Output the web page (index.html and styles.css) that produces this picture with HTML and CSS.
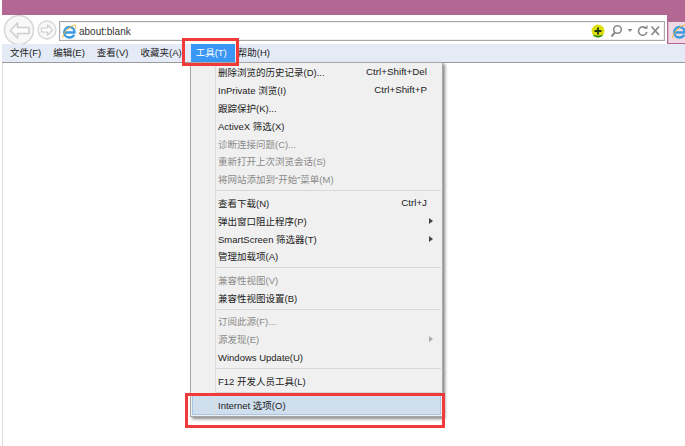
FILE: index.html
```html
<!DOCTYPE html>
<html lang="zh">
<head>
<meta charset="utf-8">
<title>Internet 选项</title>
<link rel="stylesheet" href="styles.css">
</head>
<body>
<div class="window">
  <div class="titlebar"></div>
  <div class="navbar">
    <div class="navmain">
      <div class="navbuttons">
        <svg width="32" height="30" viewBox="0 0 32 30"><circle cx="16" cy="15" r="14.500" fill="#f7f7f7" stroke="#d6d6d6" stroke-width="1.500"/><path d="M7.500 15.500l7-7.500v4.500h11.500v6H14.500v4.500z" fill="#fcfcfc" stroke="#cfcfcf" stroke-width="1.600" stroke-linejoin="round"/></svg>
        <svg class="forward" width="20" height="20" viewBox="0 0 20 20"><circle cx="10" cy="10" r="9" fill="#f7f7f7" stroke="#d6d6d6" stroke-width="1.300"/><path d="M15.500 10l-5-5v3H4.500v4h6v3z" fill="#fcfcfc" stroke="#cfcfcf" stroke-width="1.200" stroke-linejoin="round"/></svg>
      </div>
      <div class="address">
        <svg width="14" height="15" viewBox="0 0 14 15"><path d="M3 8.500h9.500C12.800 5 10.500 3 7.500 3 4.500 3 2.200 5.400 2.200 8.500S4.500 13.500 7.500 13.500c2.200 0 3.800-1 4.700-2.800" fill="none" stroke="#3a9be0" stroke-width="2.300"/><path d="M.7 14C.3 10 6 3 12.500 1c1.500-.3 1.500 2.500.7 4" fill="none" stroke="#f0b429" stroke-width="1"/></svg>
        <span class="url">about:blank</span>
        <span class="spacer"></span>
        <svg class="shield" width="14" height="14" viewBox="0 0 14 14"><circle cx="7" cy="7" r="6.500" fill="#dede10"/><path d="M1.500 10.500a6.500 6.500 0 0 0 11 0c-3 1.500-8 1.500-11 0z" fill="#2c8a1a"/><path d="M7 3.500v7M3.500 7h7" stroke="#1d3a10" stroke-width="1.800"/></svg>
        <svg class="tool" width="50" height="14" viewBox="0 0 50 14"><circle cx="7.500" cy="5.500" r="3.800" fill="none" stroke="#8a8a8a" stroke-width="1.600"/><path d="M4.800 8.500L1.500 12.500" stroke="#8a8a8a" stroke-width="2"/><path d="M17.500 5h5l-2.500 3z" fill="#8a8a8a"/><path d="M36 4.500a4.200 4.200 0 1 0 .8 3.500" fill="none" stroke="#8a8a8a" stroke-width="1.600"/><path d="M33.500 4.800h4V1z" fill="#8a8a8a"/><path d="M41.500 2.500l7.500 8.500M49 2.500L41.500 11" stroke="#8a8a8a" stroke-width="1.800"/></svg>
      </div>
    </div>
    <div class="tabstrip">
      <div class="tab">
        <svg width="14" height="15" viewBox="0 0 14 15"><path d="M3 8.500h9.500C12.800 5 10.500 3 7.500 3 4.500 3 2.200 5.400 2.200 8.500S4.500 13.500 7.500 13.500c2.200 0 3.800-1 4.700-2.800" fill="none" stroke="#3a9be0" stroke-width="2.300"/><path d="M.7 14C.3 10 6 3 12.500 1c1.500-.3 1.500 2.500.7 4" fill="none" stroke="#f0b429" stroke-width="1"/></svg>
      </div>
    </div>
  </div>
  <div class="menubar">
    <span class="menuitem">文件(F)</span>
    <span class="menuitem">编辑(E)</span>
    <span class="menuitem">查看(V)</span>
    <span class="menuitem">收藏夹(A)</span>
    <span class="menuitem active">工具(T)</span>
    <span class="menuitem">帮助(H)</span>
  </div>
  <div class="content"></div>
</div>

<div class="menu">
  <div class="row"><span>删除浏览的历史记录(D)...</span><span class="key">Ctrl+Shift+Del</span></div>
  <div class="row"><span>InPrivate 浏览(I)</span><span class="key">Ctrl+Shift+P</span></div>
  <div class="row"><span>跟踪保护(K)...</span></div>
  <div class="row"><span>ActiveX 筛选(X)</span></div>
  <div class="row off"><span>诊断连接问题(C)...</span></div>
  <div class="row off"><span>重新打开上次浏览会话(S)</span></div>
  <div class="row off"><span>将网站添加到“开始”菜单(M)</span></div>
  <div class="sep"></div>
  <div class="row"><span>查看下载(N)</span><span class="key">Ctrl+J</span></div>
  <div class="row"><span>弹出窗口阻止程序(P)</span><i class="arrow"></i></div>
  <div class="row"><span>SmartScreen 筛选器(T)</span><i class="arrow"></i></div>
  <div class="row"><span>管理加载项(A)</span></div>
  <div class="sep"></div>
  <div class="row off"><span>兼容性视图(V)</span></div>
  <div class="row"><span>兼容性视图设置(B)</span></div>
  <div class="sep"></div>
  <div class="row off"><span>订阅此源(F)...</span></div>
  <div class="row off"><span>源发现(E)</span><i class="arrow"></i></div>
  <div class="row"><span>Windows Update(U)</span></div>
  <div class="sep"></div>
  <div class="row"><span>F12 开发人员工具(L)</span></div>
  <div class="sep"></div>
  <div class="row hot"><span>Internet 选项(O)</span></div>
</div>
<div class="mark mark-tools"></div>
<div class="mark mark-options"></div>
</body>
</html>
```
FILE: styles.css
```css
* { box-sizing: border-box; }
html, body { margin: 0; height: 446px; overflow: hidden; background: #fff; }
body { position: relative; font-family: "Liberation Sans", "Noto Sans CJK SC", sans-serif; font-size: 9.5px; color: #222; }
svg { display: block; flex: none; }
.window { display: flex; flex-direction: column; height: 446px; padding-left: 2px; }
.titlebar { height: 15px; background: #b26892; flex: none; }
.navbar { height: 29px; display: flex; flex: none; }
.navmain { width: 665px; background: #fff; display: flex; align-items: flex-start; flex: none; }
.navbuttons { width: 57px; padding: 0 0 0 1px; display: flex; align-items: center; flex: none; height: 29px; }
.forward { margin-left: 2px; }
.address { width: 606px; height: 20px; margin-top: 6px; border: 1px solid #a8a8a8; box-shadow: inset 0 0 0 1px #f0f0f0; background: #fff; display: flex; align-items: center; padding: 0 4px 0 2px; gap: 3px; flex: none; }
.url { font-size: 10px; color: #333; }
.spacer { flex: 1; }
.tool { margin-left: 2px; }
.tabstrip { flex: 1; background: #b26892; padding: 7px 0 0 1px; }
.tab { height: 21px; background: #f0d8e4; border-left: 1px solid #d8b8c8; padding: 2px 0 0 3px; overflow: hidden; }
.menubar { height: 19px; background: #e4ebf7; display: flex; align-items: center; padding-left: 2px; border-bottom: 1px solid #9a9a9a; flex: none; }
.menuitem { padding: 0 6px; line-height: 18px; white-space: nowrap; }
.active { background: #3a97f5; color: #fff; padding: 0 8px 0 5px; margin: 0 -3px 0 3px; position: relative; }
.content { flex: 1; border-left: 1px solid #dcdcdc; }
.menu { position: absolute; left: 190px; top: 62px; width: 253px; height: 355px; background: #f0f0f0; border: 1px solid #a8a8a8; box-shadow: 2px 2px 3px #888; padding: 0 1px 0 25px; }
.menu::before { content: ""; position: absolute; left: 24px; top: 0; bottom: 0; width: 1px; background: #dcdcdc; }
.row { height: 17.9px; display: flex; align-items: center; justify-content: space-between; padding: 0 14px 0 2px; white-space: nowrap; }
.off { color: #8a8a8a; }
.key { font-size: 9.8px; }
.arrow { width: 0; height: 0; margin-right: -6px; border-left: 4px solid #444; border-top: 3px solid transparent; border-bottom: 3px solid transparent; }
.off .arrow { border-left-color: #aaa; }
.sep { height: 5.6px; position: relative; }
.sep::after { content: ""; position: absolute; left: 0; right: 0; top: 2px; height: 1px; background: #d8d8d8; }
.hot { height: 19.500px; margin-left: -24px; padding-left: 25px; background: #cfdfee; border: 1px solid #a9c6e6; }
.mark { position: absolute; border: 3px solid #f23a3a; }
.mark-tools { left: 182px; top: 38px; width: 57px; height: 28px; }
.mark-options { left: 185px; top: 393px; width: 260px; height: 35px; }
```
